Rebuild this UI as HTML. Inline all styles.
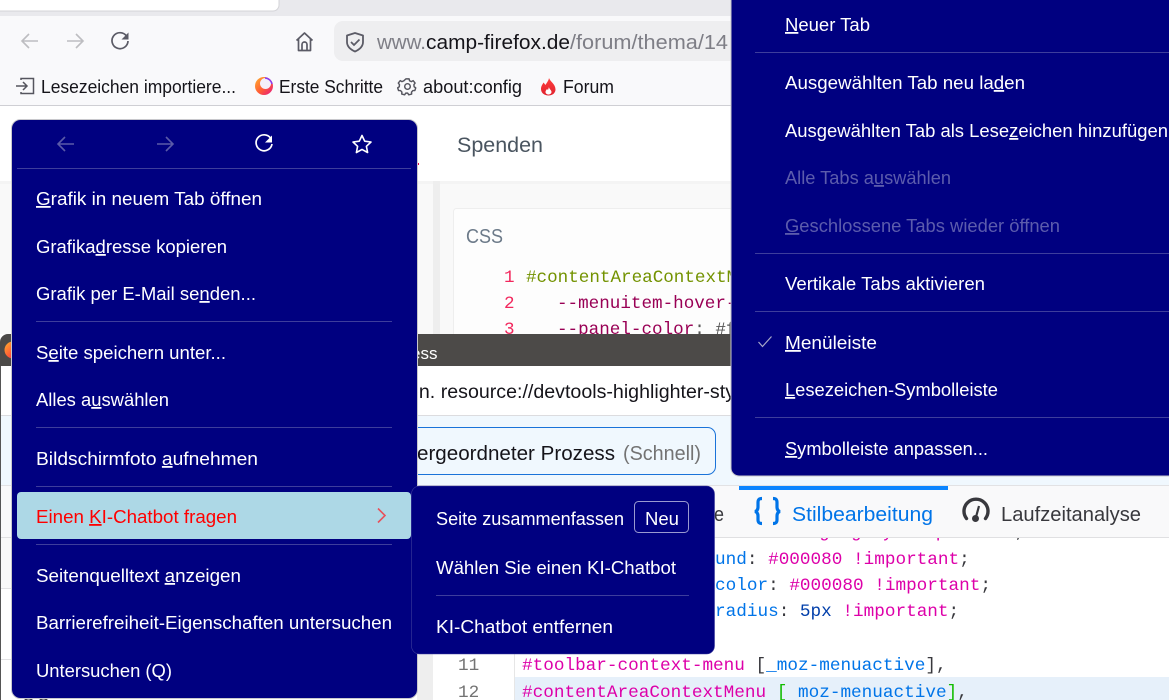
<!DOCTYPE html>
<html lang="de"><head><meta charset="utf-8"><title>Kontextmenüs</title>
<style>
html,body{margin:0;padding:0;width:1169px;height:700px;overflow:hidden;background:#fff}
svg{display:block}
text{font-family:"Liberation Sans",sans-serif;font-size:18px;white-space:pre}
.m{fill:#fff}
.d{fill:#5c5cac}
.u{text-decoration:underline;text-decoration-thickness:1px;text-underline-offset:3px}
.t{fill:#15141a;font-size:18px}
.c text{font-family:"Liberation Mono",monospace;font-size:17.7px}
.mono{font-family:"Liberation Mono",monospace;font-size:17.6px}
.sep{stroke:#3d3d9c;stroke-width:1}
</style></head><body>
<svg width="1169" height="700" viewBox="0 0 1169 700" xmlns="http://www.w3.org/2000/svg">
<defs>
<clipPath id="top"><rect x="0" y="0" width="1169" height="334"/></clipPath>
<clipPath id="codeclip"><rect x="433" y="538" width="736" height="162"/></clipPath>
<linearGradient id="ff" x1="0" y1="0" x2="1" y2="1"><stop offset="0" stop-color="#ffb02e"/><stop offset=".55" stop-color="#ff5a36"/><stop offset="1" stop-color="#e31587"/></linearGradient>
<linearGradient id="fl" x1="0" y1="0" x2="0" y2="1"><stop offset="0" stop-color="#ff3d3d"/><stop offset="1" stop-color="#e0222e"/></linearGradient>
</defs>

<!-- browser chrome -->
<rect width="1169" height="16" fill="#e9e9ed"/>
<rect x="-10" y="-10" width="289" height="21" rx="6" fill="#fff" stroke="#d4d4d8"/>
<rect y="16" width="1169" height="89" fill="#f9f9fb"/>
<rect y="105" width="1169" height="1" fill="#cfcfd4"/>
<path d="M38 41H22M29 34l-7 7 7 7" fill="none" stroke="#bdbdc1" stroke-width="1.6"/>
<path d="M67 41h16M76 34l7 7-7 7" fill="none" stroke="#bdbdc1" stroke-width="1.6"/>
<path d="M126.500 36a8 8 0 1 0 1.500 5" fill="none" stroke="#5b5b66" stroke-width="1.7"/><path d="M128.500 32.500v7h-7z" fill="#5b5b66"/>
<path d="M296.500 40.500l8-7.500 8 7.500M298.500 39v11.500h12V39M302 50.500v-6a2.500 2.500 0 0 1 5 0v6" fill="none" stroke="#5b5b66" stroke-width="1.7" stroke-linejoin="round"/>
<rect x="334" y="21" width="420" height="40" rx="9" fill="#eeeef0"/>
<path d="M355 33l8 2.500v6.500c0 4.500-3.500 7.500-8 9.500-4.500-2-8-5-8-9.500v-6.500z" fill="none" stroke="#5b5b66" stroke-width="1.8" stroke-linejoin="round"/>
<path d="M351 42l3 3 5.500-5.500" fill="none" stroke="#5b5b66" stroke-width="1.7"/>
<text x="377" y="49" textLength="49" lengthAdjust="spacingAndGlyphs" fill="#7e7e86" style="font-size:20px">www.</text>
<text x="426" y="49" textLength="144" lengthAdjust="spacingAndGlyphs" fill="#15141a" style="font-size:20px">camp-firefox.de</text>
<text x="570" y="49" textLength="158" lengthAdjust="spacingAndGlyphs" fill="#7e7e86" style="font-size:20px">/forum/thema/14</text>

<path d="M21 80v-1.500h12.500v15H21V92M16 86h11M23 82l4 4-4 4" fill="none" stroke="#55555e" stroke-width="1.500"/>
<text class="t" x="41" y="93" textLength="195" lengthAdjust="spacingAndGlyphs">Lesezeichen importiere...</text>
<circle cx="264" cy="86" r="9" fill="url(#ff)"/><circle cx="265.500" cy="83.500" r="5.500" fill="#f4f0fa"/><path d="M265 78a7.500 7.500 0 0 1 7 6" fill="none" stroke="#8c3cf0" stroke-width="1.500"/>
<text class="t" x="279" y="93" textLength="104" lengthAdjust="spacingAndGlyphs">Erste Schritte</text>
<g transform="translate(407.500 86.500) scale(.8) translate(-407.500 -86.500)">
<circle cx="407.500" cy="86.500" r="3.500" fill="none" stroke="#55555e" stroke-width="1.800"/>
<path d="M405.500 77h4l.6 2.400 2.300 1 2.200-1.200 2.400 3-1.500 2 .3 2.600 2 1.400-1.100 3.300-2.500.1-1.700 1.900.2 2.500-3.600.9-1.400-2.100h-2.400l-1.400 2.100-3.600-.9.200-2.500-1.700-1.900-2.500-.1-1.100-3.300 2-1.400.3-2.600-1.500-2 2.400-3 2.200 1.200 2.300-1z" fill="none" stroke="#55555e" stroke-width="1.800" stroke-linejoin="round"/>
</g>
<text class="t" x="423" y="93" textLength="99" lengthAdjust="spacingAndGlyphs">about:config</text>
<path d="M549 78c1 3.500 6.500 6 6.500 11.500 0 3.500-3 6-7 6s-7.500-2.500-7.500-6.500c0-3 1.500-4.500 2.500-6.500l2 2.500c1-2 3-4 3.500-7z" fill="url(#fl)"/><path d="M549 87c0 2 2.500 3 2.500 5 0 1.300-1.200 2.500-3 2.500s-3-1.200-3-2.500c0-1.500 1-2 1.500-3l1 1z" fill="#fff"/>
<text class="t" x="563" y="93" textLength="51" lengthAdjust="spacingAndGlyphs">Forum</text>

<!-- page -->
<rect y="106" width="1169" height="75" fill="#fff"/>
<rect y="181" width="1169" height="153" fill="#f9f9f9"/>
<rect y="181" width="1169" height="3" fill="#f4f4f4"/>
<text x="457" y="152" textLength="86" lengthAdjust="spacingAndGlyphs" style="font-size:21.500px" fill="#4a5560">Spenden</text>
<rect x="417" y="163" width="2" height="2" fill="#e6004c"/>
<rect x="433" y="181" width="7" height="153" fill="#eeeeee"/>
<rect x="453.500" y="208.500" width="300" height="160" rx="3" fill="#fdfdfd" stroke="#eeeeee"/>
<text x="466" y="243" textLength="37" lengthAdjust="spacingAndGlyphs" style="font-size:20px" fill="#6c7a89">CSS</text>
<g clip-path="url(#top)">
<text class="mono" x="504" y="282" fill="#f2275d">1</text>
<text class="mono" x="504" y="308" fill="#f2275d">2</text>
<text class="mono" x="504" y="334" fill="#f2275d">3</text>
<text class="mono" x="526" y="282" fill="#739200">#contentAreaContextMenu</text>
<text class="mono" x="557" y="308" fill="#990055">--menuitem-hover-</text>
<text class="mono" x="557" y="334"><tspan fill="#990055">--panel-color</tspan><tspan fill="#555">: #f</tspan></text>
</g>

<!-- devtools window -->
<path d="M0 700V342a8 8 0 0 1 8-8H731v32H0z" fill="#4c4a48"/>
<rect x="1" y="366" width="730" height="49" fill="#fff"/>
<rect x="0" y="366" width="1" height="334" fill="#555"/>
<circle cx="13" cy="350" r="8.500" fill="url(#ff)"/>
<text x="411" y="359" fill="#fff" style="font-size:17px">ess</text>
<text x="408" y="398" textLength="327" lengthAdjust="spacingAndGlyphs" fill="#15141a" style="font-size:19px">en. resource://devtools-highlighter-sty</text>
<rect x="1" y="415" width="730" height="1" fill="#dcdcdf"/>
<rect x="1" y="416" width="1168" height="70" fill="#f0f8fe"/>
<rect x="300.500" y="427.500" width="415" height="47" rx="8" fill="#f0f8fe" stroke="#1a73d9"/>
<text x="417" y="460" textLength="198" lengthAdjust="spacingAndGlyphs" fill="#15141a" style="font-size:20px">ergeordneter Prozess</text>
<text x="623" y="460" textLength="78" lengthAdjust="spacingAndGlyphs" fill="#737373" style="font-size:20px">(Schnell)</text>

<!-- devtools tabs -->
<rect x="1" y="486" width="1168" height="51" fill="#f9f9fa"/>
<rect x="1" y="485" width="1168" height="1" fill="#e2e2e4"/>
<rect x="1" y="537" width="1168" height="1" fill="#e0e0e2"/>
<rect x="1" y="588" width="432" height="1" fill="#e2e2e4"/>
<rect x="1" y="538" width="432" height="50" fill="#f9f9f9"/>
<rect x="1" y="589" width="432" height="111" fill="#fff"/>
<rect x="1" y="659" width="432" height="1" fill="#e2e2e4"/>
<rect x="739" y="486" width="209" height="4" fill="#0a84ff"/>
<text x="714" y="521" textLength="10" lengthAdjust="spacingAndGlyphs" fill="#38383d" style="font-size:20px">e</text>
<path d="M762 498.500c-3 0-4 1-4 4v4.500c0 2.500-1 4-3 4.500 2 .5 3 2 3 4.500v3.500c0 3 1 4 4 4M773 498.500c3 0 4 1 4 4v4.500c0 2.500 1 4 3 4.500-2 .5-3 2-3 4.500v3.500c0 3-1 4-4 4" fill="none" stroke="#0074e8" stroke-width="3.200"/>
<text x="792" y="521" textLength="141" lengthAdjust="spacingAndGlyphs" fill="#0074e8" style="font-size:20px">Stilbearbeitung</text>
<path d="M966.500 518.500a12 12 0 1 1 19 0" fill="none" stroke="#38383d" stroke-width="3.400" stroke-linecap="round"/>
<path d="M979 506l-3 11" stroke="#38383d" stroke-width="2.200"/><circle cx="975.500" cy="518.500" r="3.500" fill="#38383d"/>
<text x="1001" y="521" textLength="140" lengthAdjust="spacingAndGlyphs" fill="#38383d" style="font-size:20px">Laufzeitanalyse</text>

<!-- code -->
<rect x="417" y="538" width="16" height="162" fill="#eeeeee"/>
<rect x="433" y="538" width="736" height="162" fill="#fff"/>
<rect x="514" y="538" width="1" height="162" fill="#e6e6e6"/>
<rect x="515" y="677" width="654" height="23" fill="#e6f0fa"/>
<g class="c" clip-path="url(#codeclip)">
<text x="819" y="537" fill="#dd00a9">g  g  y    p</text>
<text x="1014" y="537" fill="#38383d">;</text>
<text x="715" y="564"><tspan fill="#0074e8">und</tspan><tspan fill="#38383d">: </tspan><tspan fill="#dd00a9">#000080 !important</tspan><tspan fill="#38383d">;</tspan></text>
<text x="715" y="590"><tspan fill="#0074e8">color</tspan><tspan fill="#38383d">: </tspan><tspan fill="#dd00a9">#000080 !important</tspan><tspan fill="#38383d">;</tspan></text>
<text x="715" y="616"><tspan fill="#0074e8">radius</tspan><tspan fill="#38383d">: </tspan><tspan fill="#003eaa">5px </tspan><tspan fill="#dd00a9">!important</tspan><tspan fill="#38383d">;</tspan></text>
<text x="458" y="670" fill="#737373">11</text>
<text x="458" y="697" fill="#737373">12</text>
<text x="522" y="670"><tspan fill="#dd00a9">#toolbar-context-menu</tspan><tspan fill="#38383d"> [</tspan><tspan fill="#0074e8">_moz-menuactive</tspan><tspan fill="#38383d">],</tspan></text>
<text x="522" y="697"><tspan fill="#dd00a9">#contentAreaContextMenu</tspan><tspan fill="#12bc00"> [</tspan><tspan fill="#0074e8"> moz-menuactive</tspan><tspan fill="#12bc00">]</tspan><tspan fill="#38383d">,</tspan></text>
</g>
<path d="M25 700c2-2 5-2 7 0M40 700c2-2 5-2 7 0" stroke="#444" stroke-width="2" fill="none"/>

<!-- left context menu -->
<rect x="11.500" y="119.500" width="406" height="579" rx="9" fill="#000080" stroke="#c8c8cc"/>
<path d="M74 144H58M65 137l-7 7 7 7" fill="none" stroke="#5a5aa8" stroke-width="1.600"/>
<path d="M157 144h16M166 137l7 7-7 7" fill="none" stroke="#5a5aa8" stroke-width="1.600"/>
<path d="M270.500 138a8 8 0 1 0 1.500 6" fill="none" stroke="#fff" stroke-width="1.700"/><path d="M272 135.500v7h-7z" fill="#fff"/>
<path d="M362 135.500l2.700 5.700 6.300.8-4.600 4.300 1.200 6.200-5.600-3.100-5.600 3.100 1.200-6.200-4.600-4.300 6.300-.8z" fill="none" stroke="#fff" stroke-width="1.600" stroke-linejoin="round"/>
<path class="sep" d="M17 168.500H411M36 321.500H392M36 427.500H392M36 486.500H392M36 544.500H392"/>
<text class="m" x="36" y="205" textLength="226" lengthAdjust="spacingAndGlyphs"><tspan class="u">G</tspan>rafik in neuem Tab öffnen</text>
<text class="m" x="36" y="253" textLength="191" lengthAdjust="spacingAndGlyphs">Grafika<tspan class="u">d</tspan>resse kopieren</text>
<text class="m" x="36" y="300" textLength="220" lengthAdjust="spacingAndGlyphs">Grafik per E-Mail se<tspan class="u">n</tspan>den...</text>
<text class="m" x="36" y="359" textLength="190" lengthAdjust="spacingAndGlyphs">S<tspan class="u">e</tspan>ite speichern unter...</text>
<text class="m" x="36" y="406" textLength="133" lengthAdjust="spacingAndGlyphs">Alles a<tspan class="u">u</tspan>swählen</text>
<text class="m" x="36" y="465" textLength="222" lengthAdjust="spacingAndGlyphs">Bildschirmfoto <tspan class="u">a</tspan>ufnehmen</text>
<rect x="17" y="492" width="394" height="47" rx="4" fill="#add8e6"/>
<text x="36" y="523" textLength="201" lengthAdjust="spacingAndGlyphs" fill="#ff0000">Einen <tspan class="u">K</tspan>I-Chatbot fragen</text>
<path d="M378 508.500l7 7-7 7" fill="none" stroke="#e8505a" stroke-width="1.600"/>
<text class="m" x="36" y="582" textLength="205" lengthAdjust="spacingAndGlyphs">Seitenquelltext <tspan class="u">a</tspan>nzeigen</text>
<text class="m" x="36" y="629" textLength="356" lengthAdjust="spacingAndGlyphs">Barrierefreiheit-Eigenschaften untersuchen</text>
<text class="m" x="36" y="677" textLength="136" lengthAdjust="spacingAndGlyphs">Untersuchen (Q)</text>

<!-- submenu -->
<rect x="411.500" y="486" width="303" height="168" rx="8" fill="#000080" stroke="#3d3d9c" stroke-width=".6"/>
<text class="m" x="436" y="525" textLength="188" lengthAdjust="spacingAndGlyphs">Seite zusammenfassen</text>
<rect x="634.500" y="501.500" width="54" height="31" rx="4" fill="none" stroke="#9a9ad0"/>
<text class="m" x="645" y="525" textLength="34" lengthAdjust="spacingAndGlyphs">Neu</text>
<text class="m" x="436" y="574" textLength="240" lengthAdjust="spacingAndGlyphs">Wählen Sie einen KI-Chatbot</text>
<path class="sep" d="M436 595.500H689"/>
<text class="m" x="436" y="633" textLength="177" lengthAdjust="spacingAndGlyphs">KI-Chatbot entfernen</text>

<!-- right context menu -->
<path d="M731 -2V468a8 8 0 0 0 8 8H1171V-2z" fill="#000080" stroke="#c8c8cc"/>
<path class="sep" d="M755 52.500H1169M755 253.500H1169M755 311.500H1169M755 417.500H1169"/>
<text class="m" x="785" y="31" textLength="85" lengthAdjust="spacingAndGlyphs"><tspan class="u">N</tspan>euer Tab</text>
<text class="m" x="785" y="89" textLength="240" lengthAdjust="spacingAndGlyphs">Ausgewählten Tab neu la<tspan class="u">d</tspan>en</text>
<text class="m" x="785" y="137" textLength="383" lengthAdjust="spacingAndGlyphs">Ausgewählten Tab als Lese<tspan class="u">z</tspan>eichen hinzufügen</text>
<text class="d" x="785" y="184" textLength="166" lengthAdjust="spacingAndGlyphs">Alle Tabs a<tspan class="u">u</tspan>swählen</text>
<text class="d" x="785" y="232" textLength="275" lengthAdjust="spacingAndGlyphs"><tspan class="u">G</tspan>eschlossene Tabs wieder öffnen</text>
<text class="m" x="785" y="290" textLength="200" lengthAdjust="spacingAndGlyphs">Vertikale Tabs aktivieren</text>
<path d="M758.500 342l4 4.500 9-10" fill="none" stroke="#a8a8c8" stroke-width="1.200"/>
<text class="m" x="785" y="349" textLength="92" lengthAdjust="spacingAndGlyphs"><tspan class="u">M</tspan>enüleiste</text>
<text class="m" x="785" y="396" textLength="213" lengthAdjust="spacingAndGlyphs"><tspan class="u">L</tspan>esezeichen-Symbolleiste</text>
<text class="m" x="785" y="455" textLength="203" lengthAdjust="spacingAndGlyphs"><tspan class="u">S</tspan>ymbolleiste anpassen...</text>
</svg>
</body></html>
